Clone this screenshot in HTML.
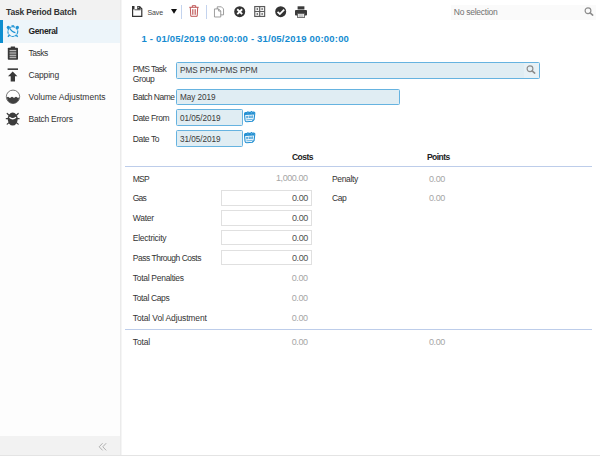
<!DOCTYPE html>
<html><head><meta charset="utf-8"><title>Task Period Batch</title>
<style>
*{box-sizing:border-box;margin:0;padding:0}
html,body{width:600px;height:456px;overflow:hidden;background:#fff}
body{position:relative;font-family:"Liberation Sans",sans-serif;font-size:8px;color:#333;line-height:10px}
.a{position:absolute;white-space:nowrap}
#side{position:absolute;left:0;top:0;width:122px;height:456px;background:#fdfdfd;border-right:1px solid #f5f5f5;box-shadow:inset -1px 0 0 #ebebeb}
#side .top{left:0;top:0;width:120px;height:20px;background:#f2f2f2}
#side .title{left:6px;top:6.7px;font-weight:bold;font-size:8.5px;letter-spacing:-0.18px;color:#333}
#side .sel{left:0;top:20px;width:120px;height:22.5px;background:#edf5fa;border-left:3px solid #0d8ecf}
.nav{left:28.5px;font-size:8.5px;color:#333}
#foot{left:0;top:436px;width:120px;height:19px;background:#f2f2f2}
#bl{left:0;top:455px;width:600px;height:1px;background:#e4e4e4}
svg{position:absolute;overflow:visible}
.lbl{left:132.8px;font-size:8.5px;color:#333}
.inp{background:#e0edf3;border:1px solid #66b3e0;border-radius:1.5px;height:17px;font-size:8.2px;letter-spacing:-0.05px;color:#3a3a3a;padding:3px 0 0 3px;line-height:10px}
.hd{font-weight:bold;font-size:8.5px;letter-spacing:-0.55px;color:#222}
.hr{left:125px;width:467px;height:1px;background:#bdcdea}
.val{width:60px;text-align:right;font-size:9px;letter-spacing:-0.43px;color:#a6a6a6}
.box{left:221px;width:91px;height:16px;border:1px solid #e0e0e0;background:#fff;font-size:9px;letter-spacing:-0.47px;color:#505050;text-align:right;padding:2px 3.3px 0 0;line-height:10px}
</style></head><body>
<div id="side">
  <div class="a top"></div>
  <div class="a title">Task Period Batch</div>
  <div class="a sel"></div>
  <div class="a nav" style="top:26.2px;font-weight:bold;letter-spacing:-0.38px;color:#222">General</div>
  <div class="a nav" style="top:48.2px;letter-spacing:-0.5px">Tasks</div>
  <div class="a nav" style="top:70.2px;letter-spacing:-0.17px">Capping</div>
  <div class="a nav" style="top:92.2px">Volume Adjustments</div>
  <div class="a nav" style="top:114.2px;letter-spacing:-0.26px">Batch Errors</div>
  <div class="a" id="foot"></div>
</div>
<div class="a" style="left:147.5px;top:7.5px;font-size:7px;letter-spacing:-0.1px;color:#444">Save</div>
<div class="a" style="left:451px;top:4.6px;width:145px;height:15px;background:#fafafa"></div>
<div class="a" style="left:453.8px;top:7px;font-size:8.5px;letter-spacing:-0.26px;color:#707070">No selection</div>
<div class="a" style="left:141.5px;top:33.5px;font-size:9.5px;letter-spacing:0.2px;font-weight:bold;color:#148bd0">1 - 01/05/2019 00:00:00 - 31/05/2019 00:00:00</div>

<div class="a lbl" style="top:64px;letter-spacing:-0.60px">PMS Task</div>
<div class="a lbl" style="top:74.3px;letter-spacing:-0.42px">Group</div>
<div class="a inp" style="left:176px;top:62px;width:364px">PMS PPM-PMS PPM</div>
<div class="a lbl" style="top:92.3px;letter-spacing:-0.51px">Batch Name</div>
<div class="a inp" style="left:176px;top:88.6px;width:224px;height:16.4px">May 2019</div>
<div class="a lbl" style="top:113.4px;letter-spacing:-0.43px">Date From</div>
<div class="a inp" style="left:176px;top:109px;width:67px;padding-top:3.6px">01/05/2019</div>
<div class="a lbl" style="top:134.4px;letter-spacing:-0.39px">Date To</div>
<div class="a inp" style="left:176px;top:130px;width:67px;padding-top:3.6px">31/05/2019</div>

<div class="a hd" style="left:292px;top:152px">Costs</div>
<div class="a hd" style="left:427px;top:152px">Points</div>
<div class="a hr" style="top:166px"></div>

<div class="a lbl" style="top:173.6px;letter-spacing:-0.8px">MSP</div>
<div class="a val" style="left:247.6px;top:173px">1,000.00</div>
<div class="a lbl" style="left:332px;top:173.6px;letter-spacing:-0.34px">Penalty</div>
<div class="a val" style="left:384.8px;top:173.6px">0.00</div>

<div class="a lbl" style="top:193.3px;letter-spacing:-0.8px">Gas</div>
<div class="a box" style="top:190px">0.00</div>
<div class="a lbl" style="left:332px;top:193.3px;letter-spacing:-0.43px">Cap</div>
<div class="a val" style="left:384.8px;top:193.3px">0.00</div>

<div class="a lbl" style="top:213.3px;letter-spacing:-0.27px">Water</div>
<div class="a box" style="top:210px">0.00</div>
<div class="a lbl" style="top:233px;letter-spacing:-0.26px">Electricity</div>
<div class="a box" style="top:230px;height:15.4px">0.00</div>
<div class="a lbl" style="top:252.5px;letter-spacing:-0.48px">Pass Through Costs</div>
<div class="a box" style="top:249.6px;height:15.6px">0.00</div>
<div class="a lbl" style="top:272.8px;letter-spacing:-0.29px">Total Penalties</div>
<div class="a val" style="left:247.6px;top:272.8px">0.00</div>
<div class="a lbl" style="top:292.6px;letter-spacing:-0.37px">Total Caps</div>
<div class="a val" style="left:247.6px;top:292.6px">0.00</div>
<div class="a lbl" style="top:312.6px;letter-spacing:-0.13px">Total Vol Adjustment</div>
<div class="a val" style="left:247.6px;top:312.6px">0.00</div>
<div class="a hr" style="top:329.1px"></div>
<div class="a lbl" style="top:336.6px;letter-spacing:-0.15px">Total</div>
<div class="a val" style="left:247.6px;top:336.6px">0.00</div>
<div class="a val" style="left:384.8px;top:336.6px">0.00</div>
<div class="a" id="bl"></div>

<!-- save -->
<svg style="left:132px;top:5.9px" width="10.4" height="11" viewBox="0 0 10.4 11"><path d="M0.6 0.3V10.4H9.8V2.8L7.6 0.6" fill="#fff" stroke="#333" stroke-width="1.2"/><rect x="0" y="0" width="2.5" height="3.4" fill="#333"/><path d="M2.5 3.8H8.6" stroke="#444" stroke-width="0.9"/><path d="M5.2 0H7.6L8.6 1V3.4H5.2Z" fill="#3a3a3a"/><rect x="5.9" y="0.9" width="0.8" height="1.1" fill="#ddd"/></svg>
<!-- caret -->
<svg style="left:171.3px;top:9.3px" width="6" height="5" viewBox="0 0 6 5"><path d="M0 0H6L3 4.8Z" fill="#111"/></svg>
<div class="a" style="left:181px;top:5px;width:1px;height:14px;background:#c3d3ee"></div>
<!-- trash -->
<svg style="left:189px;top:5.3px" width="10" height="12" viewBox="0 0 10 12"><g fill="none" stroke="#b84444" stroke-width="0.9"><path d="M0.3 2.3H9.7"/><path d="M3.3 2.2V0.7H6.7V2.2"/><path d="M1.3 2.5L1.8 11.3H8.2L8.7 2.5"/><path d="M3.5 4.2V9.8M5 4.2V9.8M6.5 4.2V9.8" stroke-width="0.7"/></g></svg>
<div class="a" style="left:206px;top:5px;width:1px;height:14px;background:#c3d3ee"></div>
<!-- copy -->
<svg style="left:214px;top:5.5px" width="10.2" height="11.8" viewBox="0 0 11 12"><g fill="#fff" stroke="#8a8a8a" stroke-width="0.9"><path d="M3.5 0.5H8L10.3 2.8V9.2H3.5Z"/><path d="M0.5 2.8H5L7.3 5.1V11.5H0.5Z"/><path d="M5 2.8V5.1H7.3" fill="none"/></g></svg>
<!-- x circle -->
<svg style="left:234px;top:6.4px" width="11.4" height="11.4" viewBox="0 0 12 12"><circle cx="6" cy="6" r="5.8" fill="#333"/><path d="M3.4 3.4L8.6 8.6M8.6 3.4L3.4 8.6" stroke="#fff" stroke-width="2" stroke-linecap="butt"/></svg>
<!-- grid -->
<svg style="left:254px;top:6.2px" width="11.4" height="11" viewBox="0 0 12 12"><g fill="#f4f4f4" stroke="#5a5a5a" stroke-width="1.25"><rect x="0.6" y="0.6" width="10.8" height="10.8"/><path d="M6 0.5V11.5M0.5 6H11.5"/></g><g fill="#5a5a5a"><rect x="2.7" y="2.3" width="1.3" height="2"/><rect x="8" y="2.3" width="1.3" height="2"/><rect x="2.7" y="7.7" width="1.3" height="2"/><rect x="8" y="7.7" width="1.3" height="2"/></g></svg>
<!-- check circle -->
<svg style="left:274.7px;top:6.3px" width="11.4" height="11.4" viewBox="0 0 12 12"><circle cx="6" cy="6" r="5.8" fill="#333"/><path d="M2.7 6.1L5.1 8.5L9.7 3.7" fill="none" stroke="#fff" stroke-width="1.9"/></svg>
<!-- printer -->
<svg style="left:295px;top:5.7px" width="12" height="12" viewBox="0 0 12 12"><rect x="2.6" y="0.3" width="6.8" height="3.2" fill="#3a3a3a"/><rect x="0" y="3.9" width="12" height="5.6" rx="0.9" fill="#3a3a3a"/><rect x="2.6" y="7.4" width="6.8" height="4.2" fill="#eee" stroke="#555" stroke-width="0.8"/><path d="M3.8 9H8.2M3.8 10.3H8.2" stroke="#999" stroke-width="0.6"/></svg>
<!-- search -->
<svg style="left:584px;top:7px" width="10" height="9" viewBox="0 0 10 9"><circle cx="4" cy="3.7" r="2.9" fill="none" stroke="#8c8c8c" stroke-width="1.15"/><path d="M6.1 5.9L8.7 8.1" stroke="#8c8c8c" stroke-width="1.6" stroke-linecap="round"/></svg>
<!-- search in PMS input -->
<div class="a" style="left:524px;top:63px;width:15px;height:15px;background:#e7f1f6"></div>
<svg style="left:526.3px;top:65.1px" width="10" height="9" viewBox="0 0 10 9"><circle cx="4" cy="3.7" r="2.9" fill="none" stroke="#8c8c8c" stroke-width="1.15"/><path d="M6.1 5.9L8.7 8.1" stroke="#8c8c8c" stroke-width="1.6" stroke-linecap="round"/></svg>

<!-- clock -->
<svg style="left:6px;top:24px" width="14" height="14" viewBox="6 24 14 14"><g stroke="#1b92d4" fill="none"><circle cx="12.8" cy="31.6" r="4.9" stroke-width="1.2" stroke-dasharray="2.6 0.6" opacity="0.9"/><path d="M10 28.6C11.2 31 13 32.4 15.4 32.6" stroke-width="1.2"/><path d="M9.3 35.3L7.9 36.8M16.3 35.3L17.7 36.8" stroke-width="1.4"/></g><g fill="#1b92d4"><circle cx="8.3" cy="27.4" r="1.6"/><circle cx="17.4" cy="27.4" r="1.6"/><path d="M11.2 25.2H14.4L12.8 27.6Z"/></g></svg>
<!-- clipboard -->
<svg style="left:7px;top:46px" width="12" height="14" viewBox="7 46 12 14"><rect x="7.8" y="47.8" width="10.2" height="12" rx="0.8" fill="#383838"/><rect x="10.7" y="46.4" width="4.4" height="2" rx="0.4" fill="#383838"/><rect x="9.6" y="49.7" width="6.6" height="8.7" fill="#5c5c5c"/><g fill="#c4c4c4"><rect x="9.6" y="50" width="6.6" height="0.9"/><rect x="9.6" y="52" width="6.6" height="2.2" fill="#8e8e8e"/><rect x="9.6" y="55.2" width="6.6" height="0.9"/><rect x="9.6" y="57.2" width="6.6" height="0.9"/></g></svg>
<!-- capping -->
<svg style="left:7px;top:68px" width="12" height="14" viewBox="7 68 12 14"><rect x="7.6" y="68.4" width="10.4" height="1.5" fill="#2e2e2e"/><path d="M12.7 71.6L17.4 76.2H15V81.4H10.7V76.2H8L12.7 71.6Z" fill="#383838"/></svg>
<!-- volume -->
<svg style="left:5px;top:89px" width="16" height="16" viewBox="5 89 16 16"><circle cx="13" cy="96.8" r="6.7" fill="#fff" stroke="#6a6a6a" stroke-width="0.9"/><path d="M6.9 97.6Q7.9 96.2 9 97.4Q10 98.4 11 97.3Q12 96.2 13 97.3Q14 98.4 15 97.3Q16 96.2 17 97.3Q18 98.4 19.1 97.2A6.1 6.1 0 0 1 6.9 97.6Z" fill="#404040"/></svg>
<!-- bug -->
<svg style="left:5px;top:111px" width="16" height="16" viewBox="5 111 16 16"><ellipse cx="12.7" cy="119.1" rx="5" ry="6.5" fill="#3c3c3c"/><g stroke="#3c3c3c" stroke-width="1.2" stroke-linecap="round"><path d="M7.2 113.5L9 115.2M18.2 113.5L16.4 115.2M6.3 118.7H8.2M17.2 118.7H19.1M7.2 124.1L9 122.6M18.2 124.1L16.4 122.6"/></g><path d="M9.4 117.2Q12.7 120.2 16 117.2" stroke="#fff" stroke-width="1.3" fill="none"/></svg>
<!-- chevrons -->
<svg style="left:98px;top:442px" width="10" height="10" viewBox="98 442 10 10"><path d="M102.6 443.2L99.2 446.8L102.6 450.4M106.2 443.2L102.8 446.8L106.2 450.4" fill="none" stroke="#a8a8a8" stroke-width="0.9"/></svg>
<!-- cal1 -->
<svg style="left:244px;top:110.8px" width="11.4" height="11.6" viewBox="0 0 11.4 11.6"><path d="M1.6 1.6L9.8 1.1Q10.9 1.1 10.8 2.2L10.1 8.5L8.5 10.3L2.7 10.7Q1.2 10.7 1 9.3L0.5 3Q0.5 1.7 1.6 1.6Z" fill="#eaf4fb" stroke="#2490d2" stroke-width="1.1"/><path d="M0.9 1.9L10.6 1.3L10.4 3.4L0.8 3.9Z" fill="#2490d2"/><path d="M3.9 0.2V1.6M7.4 0V1.4" stroke="#2490d2" stroke-width="1.1"/><path d="M3.9 1.5V2.5M7.4 1.3V2.3" stroke="#cfe7f6" stroke-width="0.5"/><g fill="#2490d2"><path d="M2.3 5L4.1 4.9L4.2 7.1L2.5 7.2Z"/><path d="M4.8 4.85L6.6 4.75L6.6 6.95L4.9 7.05Z"/><path d="M7.3 4.7L9 4.6L8.8 6.8L7.3 6.9Z"/></g><g fill="#eaf4fb"><rect x="2.9" y="5.6" width="0.8" height="0.9"/><rect x="5.3" y="5.5" width="0.8" height="0.9"/><rect x="7.7" y="5.4" width="0.7" height="0.9"/></g><path d="M2.4 8.8L8.6 8.4" stroke="#4fa8de" stroke-width="0.8"/><path d="M10.1 8.5L8.3 8.7L8.5 10.4Z" fill="#2490d2"/></svg>
<!-- cal2 -->
<svg style="left:244px;top:131.8px" width="11.4" height="11.6" viewBox="0 0 11.4 11.6"><path d="M1.6 1.6L9.8 1.1Q10.9 1.1 10.8 2.2L10.1 8.5L8.5 10.3L2.7 10.7Q1.2 10.7 1 9.3L0.5 3Q0.5 1.7 1.6 1.6Z" fill="#eaf4fb" stroke="#2490d2" stroke-width="1.1"/><path d="M0.9 1.9L10.6 1.3L10.4 3.4L0.8 3.9Z" fill="#2490d2"/><path d="M3.9 0.2V1.6M7.4 0V1.4" stroke="#2490d2" stroke-width="1.1"/><path d="M3.9 1.5V2.5M7.4 1.3V2.3" stroke="#cfe7f6" stroke-width="0.5"/><g fill="#2490d2"><path d="M2.3 5L4.1 4.9L4.2 7.1L2.5 7.2Z"/><path d="M4.8 4.85L6.6 4.75L6.6 6.95L4.9 7.05Z"/><path d="M7.3 4.7L9 4.6L8.8 6.8L7.3 6.9Z"/></g><g fill="#eaf4fb"><rect x="2.9" y="5.6" width="0.8" height="0.9"/><rect x="5.3" y="5.5" width="0.8" height="0.9"/><rect x="7.7" y="5.4" width="0.7" height="0.9"/></g><path d="M2.4 8.8L8.6 8.4" stroke="#4fa8de" stroke-width="0.8"/><path d="M10.1 8.5L8.3 8.7L8.5 10.4Z" fill="#2490d2"/></svg>


</body></html>
